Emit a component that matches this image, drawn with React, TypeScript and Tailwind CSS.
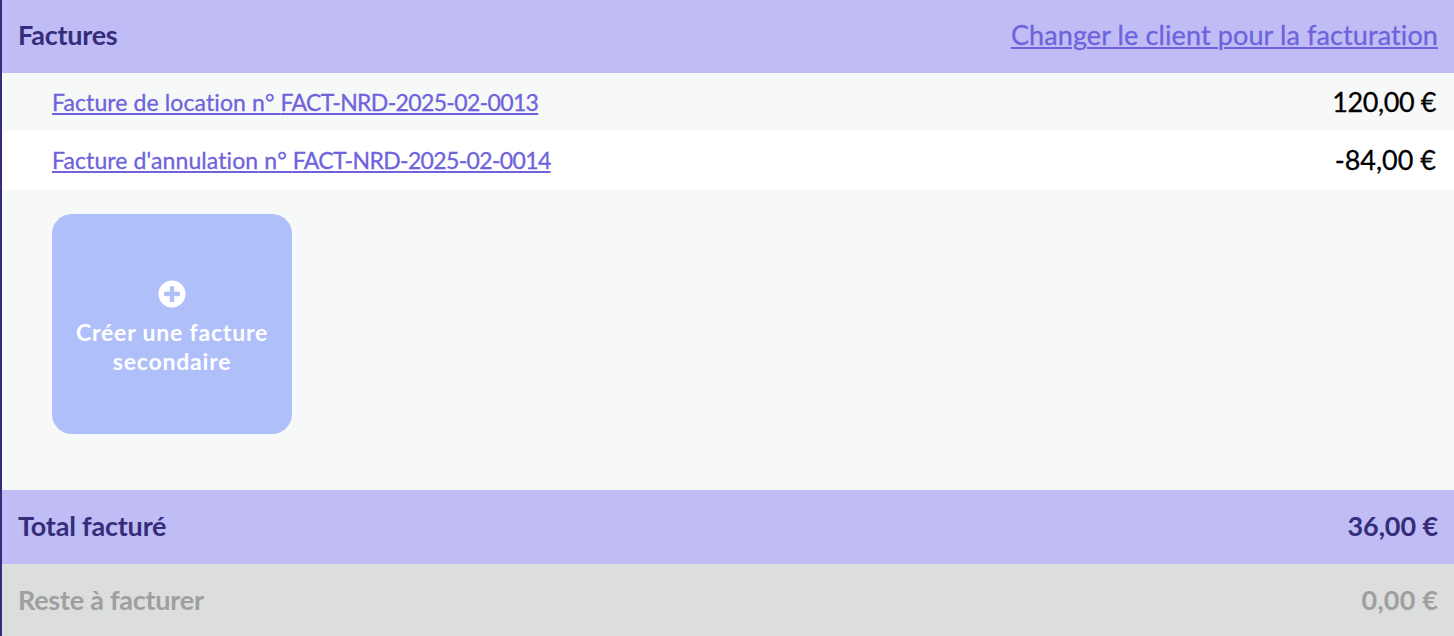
import { FaPlusCircle } from 'react-icons/fa'

const INVOICES = [
  {
    prefix: 'Facture de location',
    number: 'FACT-NRD-2025-02-0013',
    amount: '120,00 €',
    row: 'h-[58px] pb-px',
    tracking: 'tracking-[-0.4px]',
  },
  {
    prefix: "Facture d'annulation",
    number: 'FACT-NRD-2025-02-0014',
    amount: '-84,00 €',
    row: 'h-[59px] bg-white pb-0.5',
    tracking: 'tracking-[0px]',
  },
]

export default function App() {
  return (
    <main className="flex h-[636px] w-full flex-col border-l-2 border-[#352d7a] bg-[#f7f9f8] font-['Lato',sans-serif] text-[27px] leading-9 [font-variant-ligatures:none]">
      <header className="flex h-[73px] shrink-0 items-center justify-between bg-[#c0bdf6] px-4 pb-[3px]">
        <h2 className="font-bold tracking-[-0.25px] text-[#352d7a]">Factures</h2>
        <a
          href="#"
          className="tracking-[0.11px] text-[#6e63dc] underline decoration-2 underline-offset-2 [-webkit-text-stroke:0.3px]"
        >
          Changer le client pour la facturation
        </a>
      </header>

      <ul className="[-webkit-text-stroke:0.3px]">
        {INVOICES.map(({ prefix, number, amount, row, tracking }) => (
          <li key={number} className={`flex items-center justify-between pr-[18px] pl-[50px] ${row}`}>
            <a
              href="#"
              className="pt-px text-[23px] tracking-[0.1px] text-[#6e63dc] underline decoration-2 underline-offset-2"
            >
              {prefix} n° <span className="tracking-[-0.65px]">{number}</span>
            </a>
            <span className={`text-black ${tracking}`}>{amount}</span>
          </li>
        ))}
      </ul>

      <section className="flex-1 px-[50px] pt-6">
        <button className="flex h-[220px] w-60 flex-col items-center justify-center rounded-[20px] bg-[#afbffa] px-4 pt-1 text-[23px] leading-[29px] font-bold tracking-[0.8px] text-white">
          <FaPlusCircle className="mt-[3px] mb-2.5 size-7" />
          Créer une facture secondaire
        </button>
      </section>

      <footer className="font-bold">
        <div className="flex h-[74px] items-center justify-between bg-[#c0bdf6] px-4 pb-0.5 text-[#352d7a]">
          <span className="tracking-[-0.2px]">Total facturé</span>
          <span className="tracking-[-0.1px]">36,00 €</span>
        </div>
        <div className="flex h-[72px] items-center justify-between bg-[#dcdedd] px-4 text-[#9f9f9f]">
          <span className="tracking-[-0.25px]">Reste à facturer</span>
          <span className="tracking-[0.15px]">0,00 €</span>
        </div>
      </footer>
    </main>
  )
}
